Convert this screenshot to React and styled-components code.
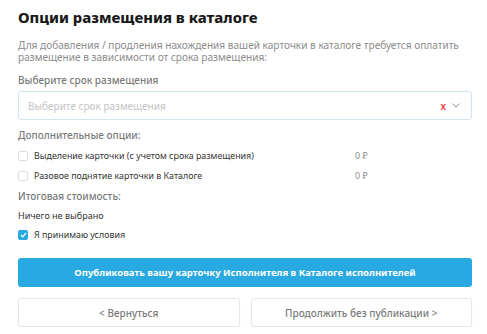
import React, { useState } from "react";
import styled, { createGlobalStyle } from "styled-components";

const Global = createGlobalStyle`
  body {
    margin: 0;
    background: #fff;
    font-family: "Noto Sans", "Open Sans", sans-serif;
  }
`;

const Page = styled.div`
  width: 454px;
  padding: 7px 15px 0 18px;
  display: flex;
  flex-direction: column;
`;

const Title = styled.h1`
  margin: 0;
  font-size: 14.8px;
  font-weight: 800;
  color: #1a1a1a;
  line-height: 20px;
`;

const Desc = styled.p`
  margin: 12px 0 0;
  font-size: 10.1px;
  line-height: 12px;
  color: #8c8c8c;
`;

const Label = styled.div`
  margin-top: ${(p) => p.$mt}px;
  font-size: 10px;
  line-height: 12px;
  color: #7a7a7a;
  font-weight: 500;
`;

const Select = styled.div`
  box-sizing: border-box;
  margin-top: 5px;
  height: 29px;
  border: 1px solid #d5e3ec;
  border-radius: 3px;
  display: flex;
  align-items: center;
  padding: 0 11px 0 9px;
  font-size: 10px;
  color: #c4c4c4;
`;

const Placeholder = styled.span`
  flex: 1;
`;

const Clear = styled.span`
  color: #f03a3a;
  font-size: 10px;
  font-weight: 600;
  margin-right: 6px;
`;

const OptionRow = styled.label`
  display: flex;
  align-items: center;
  margin-top: ${(p) => p.$mt}px;
  font-size: 8.9px;
  line-height: 12px;
  color: #333;
  cursor: pointer;
`;

const Box = styled.span`
  box-sizing: border-box;
  width: 10px;
  height: 10px;
  border: 1px solid ${(p) => (p.$checked ? "#29a9e1" : "#dedede")};
  background: ${(p) => (p.$checked ? "#29a9e1" : "#fff")};
  border-radius: 2px;
  margin-right: 6px;
  display: inline-flex;
  align-items: center;
  justify-content: center;
  flex-shrink: 0;
`;

const OptText = styled.span`
  width: 321px;
`;

const Price = styled.span`
  color: #8a8a8a;
`;

const Plain = styled.div`
  margin-top: 8px;
  font-size: 9px;
  line-height: 12px;
  color: #333;
`;

const Primary = styled.button`
  all: unset;
  box-sizing: border-box;
  margin-top: 17px;
  height: 29px;
  background: #29a9e1;
  border-radius: 3px;
  color: #fff;
  font-weight: 700;
  font-size: 9.5px;
  text-align: center;
  cursor: pointer;
`;

const BtnRow = styled.div`
  margin-top: 11px;
  display: grid;
  grid-template-columns: 1fr 1fr;
  gap: 11px;
`;

const Ghost = styled.button`
  all: unset;
  box-sizing: border-box;
  height: 29px;
  border: 1px solid #e6e6e6;
  border-radius: 3px;
  box-shadow: 0 1px 2px rgba(0, 0, 0, 0.05);
  color: #7a7a7a;
  font-size: 10px;
  font-weight: 500;
  text-align: center;
  cursor: pointer;
`;

function Check({ checked }) {
  return (
    <Box $checked={checked}>
      {checked && (
        <svg width="7" height="6" viewBox="0 0 7 6">
          <path d="M1 3l1.8 1.8L6 1" stroke="#fff" strokeWidth="1.2" fill="none" />
        </svg>
      )}
    </Box>
  );
}

export default function App() {
  const [accept, setAccept] = useState(true);
  return (
    <Page>
      <Global />
      <Title>Опции размещения в каталоге</Title>
      <Desc>
        Для добавления / продления нахождения вашей карточки в каталоге требуется оплатить
        размещение в зависимости от срока размещения:
      </Desc>
      <Label $mt={11}>Выберите срок размещения</Label>
      <Select>
        <Placeholder>Выберите срок размещения</Placeholder>
        <Clear>x</Clear>
        <svg width="8" height="5" viewBox="0 0 8 5">
          <path d="M0.5 0.5l3.5 3.5L7.5 0.5" stroke="#999" strokeWidth="1" fill="none" />
        </svg>
      </Select>
      <Label $mt={9}>Дополнительные опции:</Label>
      <OptionRow $mt={9}>
        <Check />
        <OptText>Выделение карточки (с учетом срока размещения)</OptText>
        <Price>0 ₽</Price>
      </OptionRow>
      <OptionRow $mt={8}>
        <Check />
        <OptText>Разовое поднятие карточки в Каталоге</OptText>
        <Price>0 ₽</Price>
      </OptionRow>
      <Label $mt={8}>Итоговая стоимость:</Label>
      <Plain>Ничего не выбрано</Plain>
      <OptionRow $mt={7} onClick={() => setAccept(!accept)}>
        <Check checked={accept} />
        Я принимаю условия
      </OptionRow>
      <Primary>Опубликовать вашу карточку Исполнителя в Каталоге исполнителей</Primary>
      <BtnRow>
        <Ghost>&lt; Вернуться</Ghost>
        <Ghost>Продолжить без публикации &gt;</Ghost>
      </BtnRow>
    </Page>
  );
}
